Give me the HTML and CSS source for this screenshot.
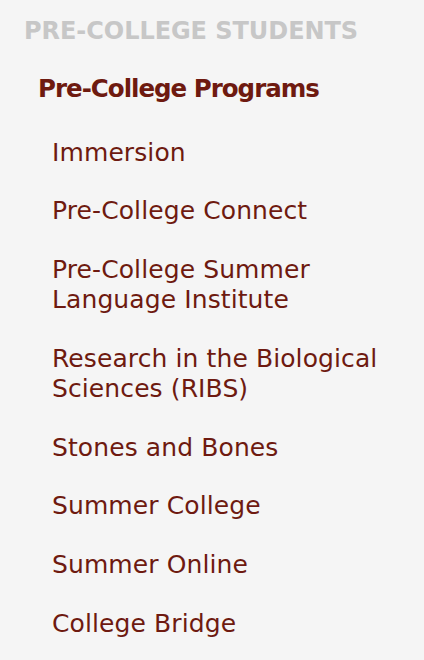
FILE: index.html
```html
<!DOCTYPE html>
<html lang="en">
<head>
<meta charset="utf-8">
<title>Pre-College Students</title>
<link rel="stylesheet" href="styles.css">
</head>
<body>
<nav class="side-nav">
  <h2 class="nav-title">PRE-COLLEGE STUDENTS</h2>
  <a class="nav-parent" href="#">Pre-College Programs</a>
  <ul class="nav-list">
    <li><a href="#">Immersion</a></li>
    <li><a href="#">Pre-College Connect</a></li>
    <li><a href="#">Pre-College Summer Language Institute</a></li>
    <li><a href="#">Research in the Biological Sciences (RIBS)</a></li>
    <li><a href="#">Stones and Bones</a></li>
    <li><a href="#">Summer College</a></li>
    <li><a href="#">Summer Online</a></li>
    <li><a href="#">College Bridge</a></li>
  </ul>
</nav>
</body>
</html>
```

FILE: styles.css
```css
html, body {
  margin: 0;
  padding: 0;
  background: #f5f5f5;
}

body {
  font-family: "DejaVu Sans", sans-serif;
  color: #6e1a10;
}

.side-nav {
  padding: 16px 20px 0 24px;
  display: flex;
  flex-direction: column;
}

.nav-title {
  margin: 0;
  font-size: 24px;
  line-height: 30px;
  font-weight: bold;
  color: #c7c7c7;
  letter-spacing: -0.05px;
}

.nav-parent {
  margin: 28px 0 0 14px;
  font-size: 24.5px;
  line-height: 30px;
  font-weight: bold;
  letter-spacing: -1px;
  color: #6e1a10;
  text-decoration: none;
}

.nav-list {
  list-style: none;
  margin: 33.5px 0 0 0;
  padding: 0 0 0 28px;
  display: flex;
  flex-direction: column;
  gap: 28.8px;
}

.nav-list a {
  display: block;
  font-size: 25px;
  line-height: 30px;
  letter-spacing: 0.1px;
  color: #6e1a10;
  text-decoration: none;
}
```
